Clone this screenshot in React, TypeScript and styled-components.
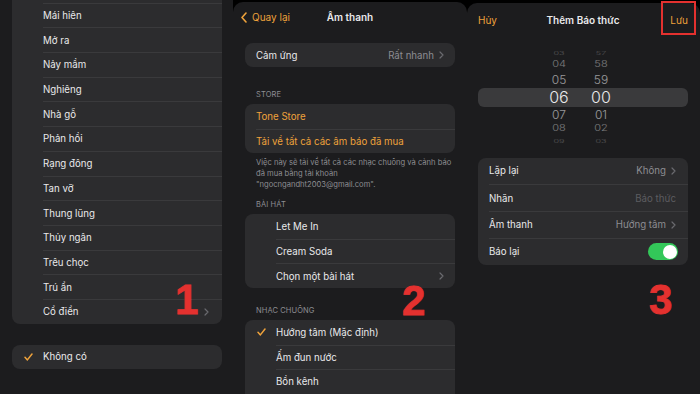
import React from 'react';
import styled, { createGlobalStyle } from 'styled-components';

const colors = {
  black: '#000000',
  bg: '#1c1c1e',
  card: '#2c2c2e',
  text: '#e9e9eb',
  secondary: '#8d8d92',
  placeholder: '#5c5c60',
  chevron: '#6a6a6f',
  orange: '#eea23b',
  separator: '#3a3a3c',
  red: '#e4312f',
  green: '#33c759',
  band: '#3a3a3c',
};

const GlobalStyle = createGlobalStyle`
  html, body {
    margin: 0;
    padding: 0;
    background: ${colors.black};
  }
  body {
    font-family: Inter, "Noto Sans", sans-serif;
    -webkit-font-smoothing: antialiased;
  }
`;

const Page = styled.div`
  display: flex;
  width: 700px;
  height: 394px;
  overflow: hidden;
  background: ${colors.black};
`;

const Screen = styled.div<{ $width: number }>`
  position: relative;
  width: ${p => p.$width}px;
  height: 394px;
  overflow: hidden;
  display: flex;
  flex-direction: column;
  background: ${colors.black};
`;

const Sheet = styled.div<{ $inset: number; $padLeft: number; $padRight: number }>`
  flex: 1;
  margin-top: ${p => p.$inset}px;
  padding: 0 ${p => p.$padRight}px 0 ${p => p.$padLeft}px;
  background: ${colors.bg};
  border-radius: ${p => (p.$inset ? '10px 10px 0 0' : '0')};
  display: flex;
  flex-direction: column;
`;

// grouped list card
const Card = styled.div<{ $top: number }>`
  margin-top: ${p => p.$top}px;
  background: ${colors.card};
  border-radius: 8px;
  overflow: hidden;
  flex-shrink: 0;
`;

const Row = styled.div<{ $height: number }>`
  display: flex;
  height: ${p => p.$height}px;
`;

const Lead = styled.div<{ $width: number }>`
  width: ${p => p.$width}px;
  flex-shrink: 0;
  display: flex;
  align-items: center;
  justify-content: center;
  padding-left: ${p => (p.$width > 20 ? 2 : 0)}px;
  box-sizing: border-box;
`;

const RowBody = styled.div<{ $first: boolean; $padRight: number }>`
  flex: 1;
  display: flex;
  align-items: center;
  justify-content: space-between;
  padding-right: ${p => p.$padRight}px;
  border-top: ${p => (p.$first ? 'none' : `0.5px solid ${colors.separator}`)};
  min-width: 0;
`;

const Label = styled.span<{ $accent?: boolean }>`
  font-size: 9.7px;
  color: ${p => (p.$accent ? colors.orange : colors.text)};
  white-space: nowrap;
`;

const Trailing = styled.span`
  display: flex;
  align-items: center;
  gap: 5px;
`;

const Value = styled.span<{ $muted?: boolean }>`
  font-size: 9.7px;
  color: ${p => (p.$muted ? colors.placeholder : colors.secondary)};
  white-space: nowrap;
`;

const SectionHeader = styled.div<{ $top: number }>`
  margin: ${p => p.$top}px 0 3px;
  padding: 0 11px;
  height: 12px;
  line-height: 12px;
  font-size: 7.5px;
  letter-spacing: 0.1px;
  text-transform: uppercase;
  color: ${colors.secondary};
`;

const Footnote = styled.div`
  margin-top: 3.5px;
  padding: 0 11px;
  font-size: 7.6px;
  line-height: 11px;
  color: ${colors.secondary};
  white-space: nowrap;
`;

const NavBar = styled.div<{ $height: number }>`
  height: ${p => p.$height}px;
  flex-shrink: 0;
  display: grid;
  grid-template-columns: 1fr auto 1fr;
  align-items: center;
`;

const NavButton = styled.button<{ $align: 'start' | 'end'; $shift?: number }>`
  justify-self: ${p => p.$align};
  margin-left: ${p => p.$shift ?? 0}px;
  display: flex;
  align-items: center;
  gap: 5px;
  padding: 0;
  border: none;
  background: none;
  font-family: inherit;
  font-size: 10px;
  color: ${colors.orange};
`;

const NavTitle = styled.div`
  font-size: 10px;
  font-weight: 600;
  color: ${colors.text};
`;

const Wheel = styled.div`
  margin-top: 9.5px;
  display: flex;
  flex-direction: column;
  flex-shrink: 0;
`;

const WheelRow = styled.div<{ $height: number; $selected: boolean }>`
  height: ${p => p.$height}px;
  display: grid;
  grid-template-columns: 30px 30px;
  column-gap: 12px;
  padding-left: 66px;
  align-items: center;
  background: ${p => (p.$selected ? colors.band : 'transparent')};
  border-radius: 6px;
`;

const WheelCell = styled.span<{ $size: number; $fade: number; $squash: number }>`
  text-align: center;
  font-size: ${p => p.$size}px;
  font-weight: 300;
  color: ${colors.text};
  opacity: ${p => p.$fade};
  transform: scaleY(${p => p.$squash});
  line-height: 1;
`;

const Toggle = styled.span<{ $on: boolean }>`
  width: 30px;
  height: 17px;
  margin-right: -2px;
  border-radius: 9px;
  background: ${p => (p.$on ? colors.green : colors.separator)};
  display: flex;
  align-items: center;
  justify-content: ${p => (p.$on ? 'flex-end' : 'flex-start')};
  padding: 0 1.5px;
  box-sizing: border-box;
`;

const Knob = styled.span`
  width: 14px;
  height: 14px;
  border-radius: 50%;
  background: #ffffff;
`;

// red annotation overlays drawn over the screenshots
const StepNumber = styled.div<{ $left: number; $top: number }>`
  position: absolute;
  left: ${p => p.$left}px;
  top: ${p => p.$top}px;
  font-family: "Liberation Sans", Arial, sans-serif;
  font-weight: 700;
  font-size: 42px;
  line-height: 1;
  color: ${colors.red};
  -webkit-text-stroke: 0.8px ${colors.red};
`;

const Highlight = styled.div`
  position: absolute;
  left: 194px;
  top: 1px;
  width: 35px;
  height: 34px;
  border: 2px solid ${colors.red};
  box-sizing: border-box;
`;

const Chevron = () => (
  <svg width="5" height="8" viewBox="0 0 5 8" fill="none">
    <path d="M1 1l3 3-3 3" stroke={colors.chevron} strokeWidth="1.2" strokeLinecap="round" strokeLinejoin="round" />
  </svg>
);

const BackChevron = () => (
  <svg width="6" height="11" viewBox="0 0 6 11" fill="none">
    <path d="M5 1L1 5.5 5 10" stroke={colors.orange} strokeWidth="1.6" strokeLinecap="round" strokeLinejoin="round" />
  </svg>
);

const Check = () => (
  <svg width="9" height="8" viewBox="0 0 9 8" fill="none">
    <path d="M1 4.3l2.4 2.6L8 1" stroke={colors.orange} strokeWidth="1.5" strokeLinecap="round" strokeLinejoin="round" />
  </svg>
);

interface Item {
  label: string;
  accent?: boolean;
  checked?: boolean;
  value?: string;
  muted?: boolean;
  chevron?: boolean;
  toggle?: boolean;
}

interface ListProps {
  items: Item[];
  rowHeight: number;
  lead: number;
  top: number;
  padRight?: number;
}

const List: React.FC<ListProps> = ({ items, rowHeight, lead, top, padRight = 12 }) => (
  <Card $top={top}>
    {items.map((item, i) => (
      <Row key={i} $height={rowHeight}>
        <Lead $width={lead}>{item.checked && <Check />}</Lead>
        <RowBody $first={i === 0} $padRight={padRight}>
          <Label $accent={item.accent}>{item.label}</Label>
          {(item.value || item.chevron || item.toggle) && (
            <Trailing>
              {item.value && <Value $muted={item.muted}>{item.value}</Value>}
              {item.chevron && <Chevron />}
              {item.toggle && (
                <Toggle $on>
                  <Knob />
                </Toggle>
              )}
            </Trailing>
          )}
        </RowBody>
      </Row>
    ))}
  </Card>
);

const classicTones: Item[] = [
  { label: '' },
  { label: 'Mái hiên' },
  { label: 'Mở ra' },
  { label: 'Nảy mầm' },
  { label: 'Nghiêng' },
  { label: 'Nhà gỗ' },
  { label: 'Phản hồi' },
  { label: 'Rạng đông' },
  { label: 'Tan vỡ' },
  { label: 'Thung lũng' },
  { label: 'Thủy ngân' },
  { label: 'Trêu chọc' },
  { label: 'Trú ẩn' },
  { label: 'Cổ điển', chevron: true },
];

const wheel = [
  { h: '03', m: '57', height: 11, size: 9, fade: 0.25, squash: 0.6 },
  { h: '04', m: '58', height: 13.5, size: 11, fade: 0.45, squash: 0.8 },
  { h: '05', m: '59', height: 17, size: 12, fade: 0.6, squash: 0.95 },
  { h: '06', m: '00', height: 18.5, size: 16, fade: 1, squash: 1 },
  { h: '07', m: '01', height: 16, size: 12, fade: 0.6, squash: 0.95 },
  { h: '08', m: '02', height: 12.5, size: 11, fade: 0.45, squash: 0.8 },
  { h: '09', m: '03', height: 11.5, size: 9, fade: 0.25, squash: 0.6 },
];

const App: React.FC = () => (
  <>
    <GlobalStyle />
    <Page>
      <Screen $width={233}>
        <Sheet $inset={0} $padLeft={12} $padRight={11}>
          <List items={classicTones} rowHeight={24.7} lead={31} top={-22} padRight={13} />
          <List items={[{ label: 'Không có', checked: true }]} rowHeight={24} lead={31} top={21} />
        </Sheet>
        <StepNumber $left={175} $top={279}>1</StepNumber>
      </Screen>

      <Screen $width={234}>
        <Sheet $inset={2} $padLeft={12} $padRight={12}>
          <NavBar $height={30}>
            <NavButton $align="start" $shift={-4}>
              <BackChevron />
              Quay lại
            </NavButton>
            <NavTitle>Âm thanh</NavTitle>
            <span />
          </NavBar>
          <List items={[{ label: 'Cảm ứng', value: 'Rất nhanh', chevron: true }]} rowHeight={24} lead={11} top={11} padRight={11} />
          <SectionHeader $top={22}>Store</SectionHeader>
          <List
            items={[
              { label: 'Tone Store', accent: true },
              { label: 'Tải về tất cả các âm báo đã mua', accent: true },
            ]}
            rowHeight={24.5}
            lead={11}
            top={0}
          />
          <Footnote>
            Việc này sẽ tải về tất cả các nhạc chuông và cảnh báo
            <br />
            đã mua bằng tài khoản
            <br />
            "ngocngandht2003@gmail.com".
          </Footnote>
          <SectionHeader $top={9.5}>Bài hát</SectionHeader>
          <List
            items={[
              { label: 'Let Me In' },
              { label: 'Cream Soda' },
              { label: 'Chọn một bài hát', chevron: true },
            ]}
            rowHeight={24.7}
            lead={31}
            top={0}
            padRight={11}
          />
          <SectionHeader $top={17}>Nhạc chuông</SectionHeader>
          <List
            items={[
              { label: 'Hướng tâm (Mặc định)', checked: true },
              { label: 'Ấm đun nước' },
              { label: 'Bồn kênh' },
              { label: '' },
            ]}
            rowHeight={24.5}
            lead={31}
            top={0}
          />
        </Sheet>
        <StepNumber $left={169} $top={280}>2</StepNumber>
      </Screen>

      <Screen $width={233}>
        <Sheet $inset={3} $padLeft={11} $padRight={12}>
          <NavBar $height={34}>
            <NavButton $align="start">Hủy</NavButton>
            <NavTitle>Thêm Báo thức</NavTitle>
            <NavButton $align="end">Lưu</NavButton>
          </NavBar>
          <Wheel>
            {wheel.map(w => (
              <WheelRow key={w.h} $height={w.height} $selected={w.h === '06'}>
                <WheelCell $size={w.size} $fade={w.fade} $squash={w.squash}>{w.h}</WheelCell>
                <WheelCell $size={w.size} $fade={w.fade} $squash={w.squash}>{w.m}</WheelCell>
              </WheelRow>
            ))}
          </Wheel>
          <List
            items={[
              { label: 'Lặp lại', value: 'Không', chevron: true },
              { label: 'Nhãn', value: 'Báo thức', muted: true },
              { label: 'Âm thanh', value: 'Hướng tâm', chevron: true },
              { label: 'Báo lại', toggle: true },
            ]}
            rowHeight={26.75}
            lead={11}
            top={11}
          />
        </Sheet>
        <Highlight />
        <StepNumber $left={182} $top={279}>3</StepNumber>
      </Screen>
    </Page>
  </>
);

export default App;
